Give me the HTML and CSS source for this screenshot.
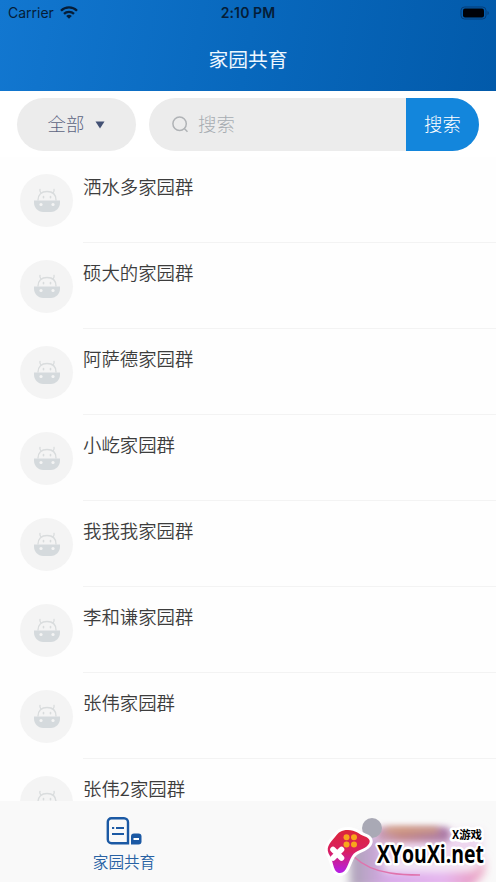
FILE: index.html
```html
<!DOCTYPE html>
<html lang="zh-CN">
<head>
<meta charset="utf-8">
<title>家园共育</title>
<link rel="stylesheet" href="styles.css">
</head>
<body>
<svg width="0" height="0" class="defs" aria-hidden="true">
  <symbol id="cow" viewBox="0 0 28 25">
    <path d="M5 12C5 6.500 8.500 3.500 14 3.500s9 3 9 8.500M8 4.900Q6.300 3.500 7 1.300M20 4.900Q21.700 3.500 21 1.300" fill="none" stroke="#d9dcdd" stroke-width="1.300" stroke-linecap="round"/>
    <path d="M10.500 8.500v1.300M17.500 8.500v1.300" stroke="#d9dcdd" stroke-width="1.600" stroke-linecap="round"/>
    <path d="M1 12.500h26v2.300c0 5-4 9.200-9 9.200h-8c-5 0-9-4.200-9-9.200z" fill="#d5dadd"/>
    <circle cx="8" cy="16.500" r="1.600" fill="#f4f4f4"/><circle cx="20" cy="16.500" r="1.600" fill="#f4f4f4"/>
  </symbol>
</svg>
<div class="app">
  <header class="header">
    <div class="status">
      <div class="carrier"><span>Carrier</span>
        <svg width="18" height="13" viewBox="0 0 18 13"><g fill="none" stroke="#051d38" stroke-width="2.300"><path d="M1 4.700a11.300 11.300 0 0 1 16 0"/><path d="M4 7.900a7.100 7.100 0 0 1 10 0"/></g><path d="M9 12.800L6.200 10a4 4 0 0 1 5.600 0z" fill="#051d38"/></svg>
      </div>
      <time>2:10 PM</time>
      <div class="power"><svg width="30" height="14" viewBox="0 0 30 14"><rect x="1" y="1" width="25" height="12" rx="3.500" fill="none" stroke="#063d77"/><rect x="3" y="2.500" width="21" height="9" rx="2" fill="#000208"/><path d="M27.500 5v4q1.300-.6 1.300-2t-1.300-2" fill="#063d77"/></svg></div>
    </div>
    <h1>家园共育</h1>
  </header>
  <div class="tools">
    <div class="filter"><span>全部</span><svg width="10" height="8" viewBox="0 0 10 8"><path d="M.5.500h9L5 7.500z" fill="#435174"/></svg></div>
    <div class="search">
      <svg width="17" height="17" viewBox="0 0 17 17" fill="none" stroke="#b0b3b6" stroke-width="1.500"><circle cx="7.600" cy="7.800" r="6.700"/><path d="M12.300 12.500l3.200 3.200"/></svg>
      <span class="hint">搜索</span><span class="go">搜索</span>
    </div>
  </div>
  <main class="list">
    <div class="row"><div class="avatar"><svg><use href="#cow"/></svg></div><div class="name">洒水多家园群</div></div>
    <div class="row"><div class="avatar"><svg><use href="#cow"/></svg></div><div class="name">硕大的家园群</div></div>
    <div class="row"><div class="avatar"><svg><use href="#cow"/></svg></div><div class="name">阿萨德家园群</div></div>
    <div class="row"><div class="avatar"><svg><use href="#cow"/></svg></div><div class="name">小屹家园群</div></div>
    <div class="row"><div class="avatar"><svg><use href="#cow"/></svg></div><div class="name">我我我家园群</div></div>
    <div class="row"><div class="avatar"><svg><use href="#cow"/></svg></div><div class="name">李和谦家园群</div></div>
    <div class="row"><div class="avatar"><svg><use href="#cow"/></svg></div><div class="name">张伟家园群</div></div>
    <div class="row"><div class="avatar"><svg><use href="#cow"/></svg></div><div class="name">张伟2家园群</div></div>
  </main>
  <nav class="tabs">
    <div class="tab">
      <svg width="36" height="28" viewBox="0 0 36 28"><path d="M5.300 1.300h12.700a4 4 0 0 1 4 4V26.300H5.500A3.700 3.700 0 0 1 1.800 22.600V4.800A3.500 3.500 0 0 1 5.300 1.300z" fill="none" stroke="#1b59a4" stroke-width="2.400"/><path d="M6 11h2.200M10 11h8M6 17h12" stroke="#1b59a4" stroke-width="2"/><path d="M28 16.500h4.500q3 0 3 3v5q0 3-3 3H25v-8q0-3 3-3z" fill="#1b59a4"/><path d="M27.500 22h5.500" stroke="#fff" stroke-width="2"/></svg>
      <span>家园共育</span>
    </div>
  </nav>
  <div class="mark">
    <svg width="186" height="81" viewBox="0 0 186 81">
      <defs>
        <linearGradient id="pad" x1="0" y1="0" x2="0" y2="1"><stop offset="0" stop-color="#dc2638"/><stop offset=".5" stop-color="#d91f62"/><stop offset="1" stop-color="#b51ee8"/></linearGradient>
        <linearGradient id="glow"><stop offset="0" stop-color="#aaa2b4"/><stop offset=".3" stop-color="#d9a9ea"/><stop offset=".7" stop-color="#e5b5ee"/><stop offset="1" stop-color="#e995b7"/></linearGradient>
        <linearGradient id="bar"><stop offset="0" stop-color="#c9a0c0"/><stop offset=".35" stop-color="#c48a8e"/><stop offset="1" stop-color="#ab7cab"/></linearGradient>
        <filter id="soft" x="-30%" y="-60%" width="160%" height="220%"><feGaussianBlur stdDeviation="5"/></filter>
        <filter id="haze" x="-30%" y="-100%" width="160%" height="300%"><feGaussianBlur stdDeviation="3"/></filter>
      </defs>
      <path d="M62 30h110v34H62z" fill="#eed7ef" filter="url(#soft)"/>
      <path d="M40 52l14-18 16 2 4 34h92l8-14v16l-14 16H40z" fill="url(#glow)" filter="url(#soft)"/>
      <rect x="66" y="26" width="74" height="15" rx="5" fill="url(#bar)" filter="url(#haze)"/>
      <rect x="76" y="26" width="52" height="6" fill="#d8a06c" opacity=".6" filter="url(#haze)"/>
      <circle cx="62" cy="27" r="10" fill="#a9a9b5"/>
      <path d="M43 55Q58 69 80 72q12 2 30 2" fill="none" stroke="#e073ad" stroke-width="1.400"/>
      <path d="M38 29c8 0 10 4 17 6.500 5 2 6 5 3 8.500-4 5-12 4.500-16 11-4 6-5 17-12 17-7 0-6-10-10-17-5-8-1-12 5-19 4-5 6-7 13-7z" fill="url(#pad)" stroke="#fff" stroke-width="6" stroke-linejoin="round" paint-order="stroke"/>
      <path d="M23 48.500l8.500 8.500M31.500 48.500L23 57" stroke="#fff" stroke-width="5.600" stroke-linecap="round"/>
      <g fill="#f8a51b"><circle cx="36.500" cy="36.300" r="3"/><circle cx="44" cy="36.300" r="3"/><circle cx="36.500" cy="43.600" r="3"/><circle cx="44" cy="43.600" r="3"/></g>
      <text class="mark-small" x="142" y="38" textLength="30" lengthAdjust="spacingAndGlyphs">X游戏</text>
      <text class="mark-big" x="67" y="61.500" textLength="107" lengthAdjust="spacingAndGlyphs">XYouXi.net</text>
    </svg>
  </div>
</div>
</body>
</html>
```
FILE: styles.css
```css
* { box-sizing: border-box; }
body { margin: 0; font-family: "Noto Sans CJK SC", sans-serif; }
.defs { display: block; }
.app { position: relative; display: flex; flex-direction: column; height: 882px; overflow: hidden; background: #fefefe; }
.header { flex: none; height: 91px; background: linear-gradient(100deg, #1277d0 0%, #0868bd 50%, #025aaa 100%); }
.status { display: grid; grid-template-columns: 1fr auto 1fr; height: 26px; padding: 0 6px 0 8px; align-items: center; font: 14px/26px Inter, sans-serif; color: #051d38; }
.carrier { display: flex; align-items: center; gap: 6px; }
.carrier svg { margin-top: -2px; }
.status time { font-weight: 600; letter-spacing: .1px; margin-right: 2px; }
.power { display: flex; justify-content: flex-end; }
.power svg { margin-top: -1px; }
h1 { margin: 19px 0 0; text-align: center; font-size: 19.800px; line-height: 28px; font-weight: 400; color: #edf7ff; }
.tools { flex: none; display: flex; gap: 13px; height: 66px; padding: 7px 17px 6px; background: #fff; }
.filter { display: flex; align-items: center; justify-content: center; gap: 11px; width: 119px; height: 53px; border-radius: 27px; background: #ececec; color: #5c6482; font-size: 18.400px; line-height: 27px; font-weight: 300; }
.filter span { margin-top: -3px; }
.search { display: flex; flex: 1; align-items: center; height: 53px; padding-left: 23px; border-radius: 27px; background: #ececec; overflow: hidden; font-size: 18.400px; line-height: 27px; font-weight: 300; }
.hint { margin: -3px 0 0 9px; color: #a7adb2; }
.go { margin-left: auto; width: 73px; height: 53px; line-height: 51px; text-align: center; background: #1386dc; color: #fff; }
.list { flex: 1; min-height: 0; overflow: hidden; }
.row { display: flex; gap: 10px; height: 86px; padding-left: 20px; }
.avatar { display: flex; align-items: center; justify-content: center; flex: none; width: 53px; height: 53px; margin-top: 17px; border-radius: 50%; background: #f4f4f4; }
.avatar svg { width: 28px; height: 25px; }
.name { flex: 1; padding-top: 16px; border-bottom: 1px solid #f3f3f3; font-size: 18.400px; line-height: 27px; font-weight: 350; color: #3d3d3d; }
.tabs { flex: none; display: flex; height: 81px; background: #f9f9f9; }
.tab { display: flex; flex-direction: column; align-items: center; width: 248px; padding-top: 16px; color: #2862a4; font-size: 15.600px; line-height: 24px; font-weight: 350; }
.tab span { margin-top: 4px; }
.mark { position: absolute; right: 0; bottom: 0; height: 81px; }
.mark svg { display: block; overflow: visible; }
.mark text { font-weight: 700; fill: #000; stroke: #fff; stroke-width: 5px; stroke-linejoin: round; paint-order: stroke; }
.mark-small { font-size: 11.500px; }
.mark-big { font-family: "Open Sans", "Noto Sans", sans-serif; font-size: 25px; }
```
